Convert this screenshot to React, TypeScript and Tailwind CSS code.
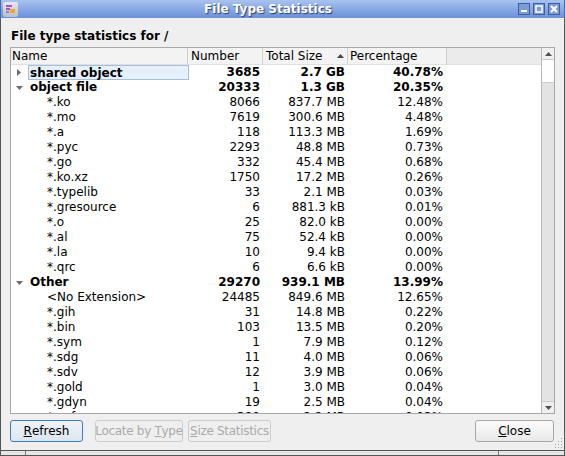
import React from "react";

type Row = { name: string; num: string; size: string; pct: string; level: 0 | 1; exp?: boolean; sel?: boolean };

const rows: Row[] = [
  { name: "shared object", num: "3685", size: "2.7 GB", pct: "40.78%", level: 0, exp: false, sel: true },
  { name: "object file", num: "20333", size: "1.3 GB", pct: "20.35%", level: 0, exp: true },
  { name: "*.ko", num: "8066", size: "837.7 MB", pct: "12.48%", level: 1 },
  { name: "*.mo", num: "7619", size: "300.6 MB", pct: "4.48%", level: 1 },
  { name: "*.a", num: "118", size: "113.3 MB", pct: "1.69%", level: 1 },
  { name: "*.pyc", num: "2293", size: "48.8 MB", pct: "0.73%", level: 1 },
  { name: "*.go", num: "332", size: "45.4 MB", pct: "0.68%", level: 1 },
  { name: "*.ko.xz", num: "1750", size: "17.2 MB", pct: "0.26%", level: 1 },
  { name: "*.typelib", num: "33", size: "2.1 MB", pct: "0.03%", level: 1 },
  { name: "*.gresource", num: "6", size: "881.3 kB", pct: "0.01%", level: 1 },
  { name: "*.o", num: "25", size: "82.0 kB", pct: "0.00%", level: 1 },
  { name: "*.al", num: "75", size: "52.4 kB", pct: "0.00%", level: 1 },
  { name: "*.la", num: "10", size: "9.4 kB", pct: "0.00%", level: 1 },
  { name: "*.qrc", num: "6", size: "6.6 kB", pct: "0.00%", level: 1 },
  { name: "Other", num: "29270", size: "939.1 MB", pct: "13.99%", level: 0, exp: true },
  { name: "<No Extension>", num: "24485", size: "849.6 MB", pct: "12.65%", level: 1 },
  { name: "*.gih", num: "31", size: "14.8 MB", pct: "0.22%", level: 1 },
  { name: "*.bin", num: "103", size: "13.5 MB", pct: "0.20%", level: 1 },
  { name: "*.sym", num: "1", size: "7.9 MB", pct: "0.12%", level: 1 },
  { name: "*.sdg", num: "11", size: "4.0 MB", pct: "0.06%", level: 1 },
  { name: "*.sdv", num: "12", size: "3.9 MB", pct: "0.06%", level: 1 },
  { name: "*.gold", num: "1", size: "3.0 MB", pct: "0.04%", level: 1 },
  { name: "*.gdyn", num: "19", size: "2.5 MB", pct: "0.04%", level: 1 },
  { name: "*.pcf", num: "380", size: "2.2 MB", pct: "0.03%", level: 1 },
];

function Arrow({ exp }: { exp: boolean }) {
  return exp ? (
    <svg width="7" height="4" viewBox="0 0 7 4" className="block">
      <path d="M0 0 L7 0 L3.5 4 Z" fill="#6b6b6b" />
    </svg>
  ) : (
    <svg width="4" height="7" viewBox="0 0 4 7" className="block">
      <path d="M0 0 L4 3.5 L0 7 Z" fill="#6b6b6b" />
    </svg>
  );
}

function TitleBtn({ kind }: { kind: "min" | "max" | "close" }) {
  return (
    <div className="w-[12px] h-[12px] border border-[#3e5f9c] bg-[#7c9cd6] flex items-center justify-center">
      <svg width="8" height="8" viewBox="0 0 8 8">
        {kind === "min" && <rect x="1" y="5" width="6" height="2" fill="#fff" />}
        {kind === "max" && <rect x="1" y="1" width="6" height="6" fill="none" stroke="#fff" strokeWidth="1.5" />}
        {kind === "close" && <path d="M1 1 L7 7 M7 1 L1 7" stroke="#fff" strokeWidth="2" />}
      </svg>
    </div>
  );
}

export default function App() {
  const font = { fontFamily: '"DejaVu Sans", Verdana, sans-serif' };
  return (
    <div className="w-[565px] h-[456px] bg-[#efefef] flex flex-col overflow-hidden text-[12px] text-black" style={font}>
      {/* Title bar */}
      <div className="h-[18px] flex items-center bg-gradient-to-b from-[#a9c2ef] via-[#89a9e5] to-[#6c91d7] border-x border-[#4d6aa6] relative">
        <div className="ml-[2px] w-[15px] h-[15px] rounded-[2px] bg-gradient-to-b from-[#e8e8e8] to-[#b8c0cc] flex items-center justify-center">
          <svg width="11" height="11" viewBox="0 0 11 11">
            <rect x="1" y="1" width="6" height="2" fill="#b04fc8" />
            <rect x="1" y="4" width="4" height="2" fill="#b04fc8" />
            <rect x="5" y="5" width="5" height="4" fill="#f3a534" />
            <rect x="1" y="7" width="3" height="2" fill="#7b8fa8" />
          </svg>
        </div>
        <div className="flex-1 text-center font-bold text-white leading-[18px] [text-shadow:1px_1px_1px_#2a3f6a]">
          File Type Statistics
        </div>
        <div className="flex items-center gap-[3px] mr-[4px]">
          <TitleBtn kind="min" />
          <TitleBtn kind="max" />
          <TitleBtn kind="close" />
        </div>
      </div>

      {/* Body */}
      <div className="flex-1 flex flex-col border-x border-[#555] px-[9px] relative">
        <div className="mt-[10px] h-[15px] leading-[16px] font-bold pl-[1px]">File type statistics for /</div>
        <div className="mt-[4px] h-[367px] border border-[#a8a8a8] flex bg-white">
          <div className="flex-1 flex flex-col overflow-hidden">
            {/* Header */}
            <div className="h-[17px] flex bg-[#ebebeb] border-b border-[#e0e0e0] leading-[16px] shrink-0">
              <div className="w-[177px] border-r border-[#d0d0d0] bg-[#f3f3f3] pl-[1px]">Name</div>
              <div className="w-[75px] border-r border-[#d0d0d0] bg-[#f3f3f3] pl-[3px]">Number</div>
              <div className="w-[85px] border-r border-[#d0d0d0] bg-[#f3f3f3] pl-[3px] flex items-center">
                <span className="flex-1">Total Size</span>
                <svg width="7" height="4" viewBox="0 0 7 4" className="mr-[3px]">
                  <path d="M0 4 L3.5 0 L7 4 Z" fill="#444" />
                </svg>
              </div>
              <div className="w-[99px] border-r border-[#d0d0d0] bg-[#f3f3f3] pl-[2px]">Percentage</div>
              <div className="flex-1" />
            </div>
            {/* Rows */}
            {rows.map((r, i) => (
              <div key={i} className={`h-[15px] flex leading-[15px] shrink-0 ${r.level === 0 ? "font-bold" : ""}`}>
                <div className="w-[177px] flex items-center shrink-0">
                  <div className="w-[17px] flex justify-center shrink-0 pr-[1px]">
                    {r.level === 0 && <Arrow exp={!!r.exp} />}
                  </div>
                  {r.level === 1 ? (
                    <span className="pl-[19px] whitespace-pre">{r.name}</span>
                  ) : r.sel ? (
                    <span className="w-[161px] h-[15px] border border-[#a3bfe0] bg-[#e6f0fa] pl-[1px] leading-[14px] shrink-0 whitespace-pre">{r.name}</span>
                  ) : (
                    <span className="pl-[2px] whitespace-pre">{r.name}</span>
                  )}
                </div>
                <div className="w-[75px] text-right pr-[3px] shrink-0">{r.num}</div>
                <div className="w-[85px] text-right pr-[3px] shrink-0">{r.size}</div>
                <div className="w-[99px] text-right pr-[4px] shrink-0">{r.pct}</div>
                <div className="flex-1" />
              </div>
            ))}
          </div>
          {/* Scrollbar */}
          <div className="w-[13px] border-l border-[#b8b8b8] flex flex-col bg-[#e3e3e3]">
            <div className="h-[12px] bg-[#f0f0f0] border-b border-[#c8c8c8] flex items-center justify-center">
              <svg width="7" height="4" viewBox="0 0 7 4"><path d="M0 4 L3.5 0 L7 4 Z" fill="#505050" /></svg>
            </div>
            <div className="h-[23px] bg-white border-b border-[#c8c8c8]" />
            <div className="flex-1" />
            <div className="h-[12px] bg-[#f0f0f0] border-t border-[#c8c8c8] flex items-center justify-center">
              <svg width="7" height="4" viewBox="0 0 7 4"><path d="M0 0 L7 0 L3.5 4 Z" fill="#505050" /></svg>
            </div>
          </div>
        </div>

        {/* Buttons */}
        <div className="mt-[6px] flex items-center h-[22px]">
          <button className="w-[73px] h-[22px] rounded-[3px] border border-[#3d7ebf] bg-gradient-to-b from-[#eef3f8] to-[#dde6ef] flex items-center justify-center whitespace-nowrap text-black">
            <span className="underline">R</span>efresh
          </button>
          <button className="ml-[12px] w-[88px] h-[22px] rounded-[3px] border border-[#cccccc] bg-[#efefef] flex items-center justify-center whitespace-nowrap text-[#aaaaaa] tracking-[-0.3px]">
            Locate by&nbsp;<span className="underline">T</span>ype
          </button>
          <button className="ml-[5px] w-[83px] h-[22px] rounded-[3px] border border-[#cccccc] bg-[#efefef] flex items-center justify-center whitespace-nowrap text-[#aaaaaa] tracking-[-0.3px]">
            <span className="underline">S</span>ize Statistics
          </button>
          <div className="flex-1" />
          <button className="w-[79px] h-[22px] rounded-[3px] border border-[#a8a8a8] bg-gradient-to-b from-[#fbfbfb] to-[#e9e9e9] flex items-center justify-center whitespace-nowrap text-black mr-[1px]">
            <span className="underline">C</span>lose
          </button>
        </div>
        <div className="flex-1" />
        {/* size grip */}
        <svg width="10" height="10" viewBox="0 0 10 10" className="absolute right-[1px] bottom-[2px]">
          {[[8, 0], [8, 3], [5, 3], [8, 6], [5, 6], [2, 6], [8, 9], [5, 9], [2, 9]].map(([x, y], k) => (
            <rect key={k} x={x} y={y} width="1" height="1" fill="#a0a0a0" />
          ))}
        </svg>
      </div>

      {/* Bottom frame */}
      <div className="h-[6px] border-t border-b border-[#555] bg-[#e6e6e6] flex border-x">
        <div className="w-[25px] border-r border-[#777]" />
        <div className="flex-1" />
        <div className="w-[66px] border-l border-[#777]" />
      </div>
    </div>
  );
}
